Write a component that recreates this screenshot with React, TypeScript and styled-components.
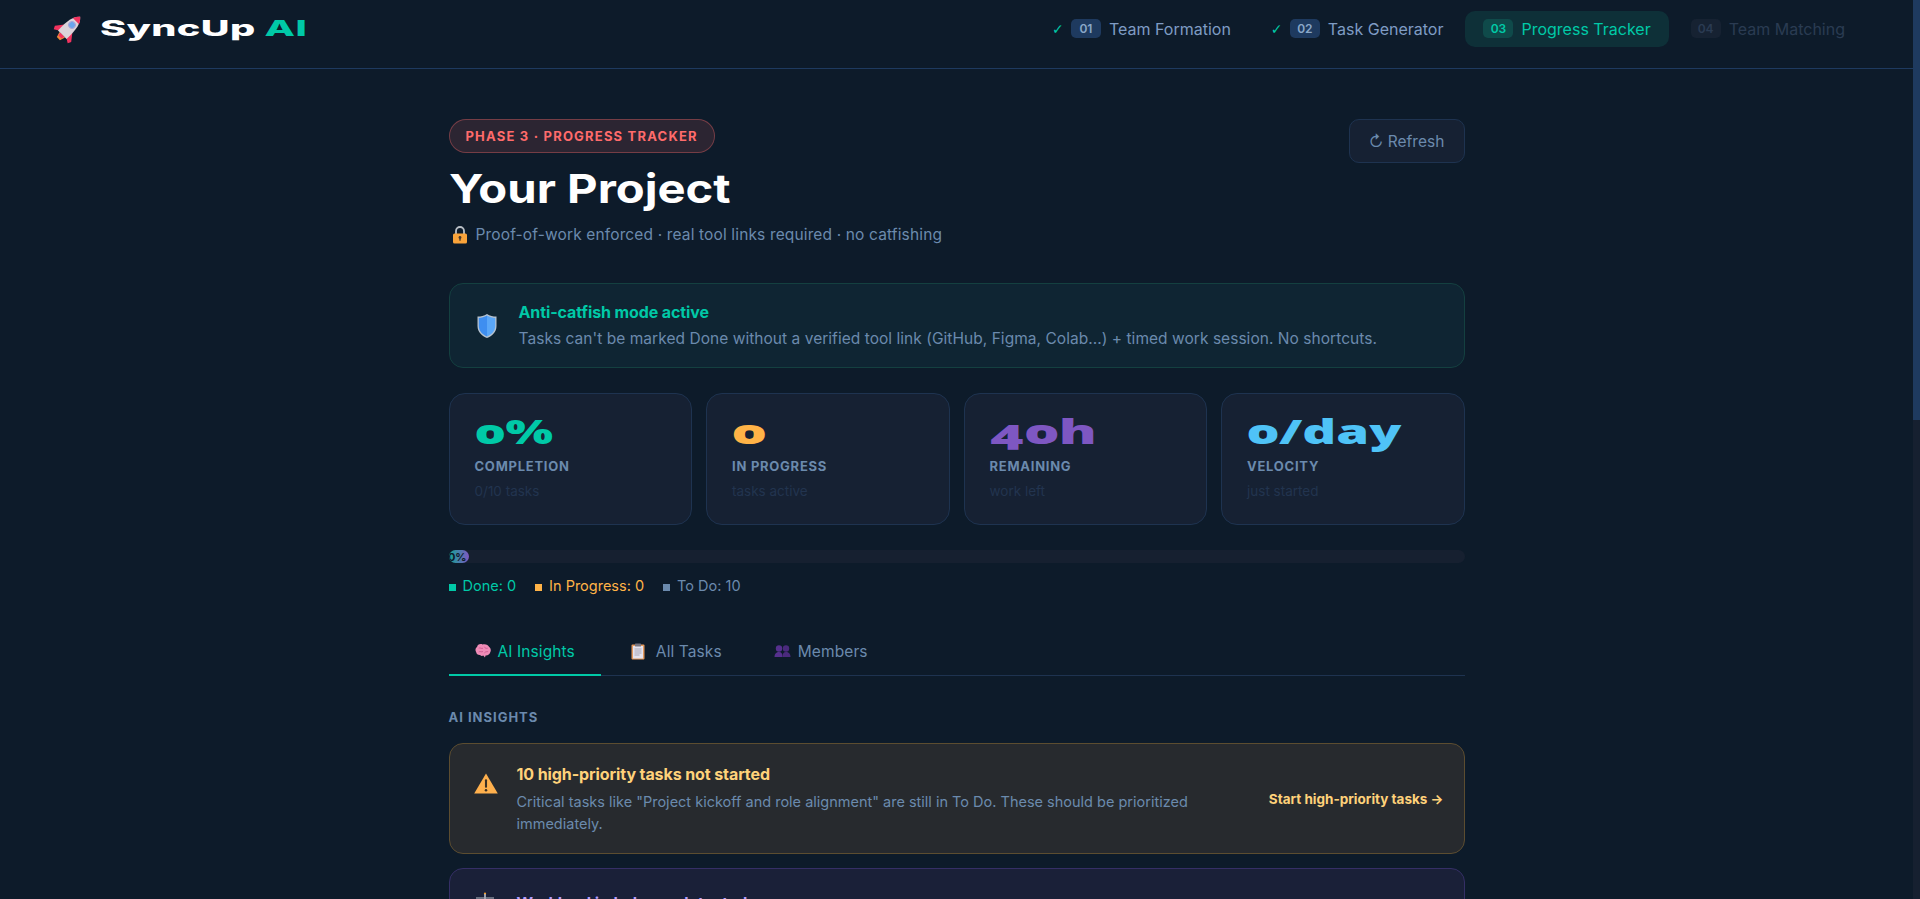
import styled, { createGlobalStyle } from "styled-components";

const GlobalStyle = createGlobalStyle`
  * { box-sizing: border-box; }
  html { scrollbar-width: none; }
  html, body { margin: 0; padding: 0; background: #0d1b2a; }
  body { font-family: "Inter", "Liberation Sans", sans-serif; color: #6b8aad; }
`;

const RocketIcon = () => (
  <svg width="33" height="33" viewBox="0 0 30 30">
    <g transform="rotate(45 15 15)">
      <path d="M11.5 22 L18.5 22 L17 27 L13 27 Z" fill="#f0883a" transform="translate(0 1)" />
      <path d="M10 15 L4.5 22 L6 25 L11 22 Z" fill="#f2335f" />
      <path d="M20 15 L25.5 22 L24 25 L19 22 Z" fill="#f2335f" />
      <path d="M15 0 C10.5 4 9 10 9.5 23 L20.5 23 C21 10 19.5 4 15 0 Z" fill="#dcd3d9" />
      <path d="M15 0 C13 1.8 12 3.4 11 5.5 L19 5.5 C18 3.4 17 1.8 15 0 Z" fill="#f2335f" />
      <path d="M12.5 23 L17.5 23 L17 26 L13 26 Z" fill="#f2335f" />
      <circle cx="15" cy="10.5" r="3" fill="#6aa5ee" stroke="#a9a6d8" strokeWidth="1" />
    </g>
  </svg>
);

const LockIcon = () => (
  <svg width="16" height="18" viewBox="0 0 16 18">
    <path d="M4 8 V5 a4 4 0 0 1 8 0 V8" fill="none" stroke="#b9bfc6" strokeWidth="1.8" />
    <rect x="1" y="7.5" width="14" height="10" rx="1.5" fill="#f9a33a" />
    <circle cx="8" cy="11.5" r="1.4" fill="#4b3a2a" />
    <rect x="7.3" y="11.5" width="1.4" height="3.2" fill="#4b3a2a" />
  </svg>
);

const ShieldIcon = () => (
  <svg width="22" height="26" viewBox="0 0 22 26">
    <path d="M11 1 C8 3 5 3.6 1.5 3.6 L1.5 13 C1.5 19 6 23 11 25 C16 23 20.5 19 20.5 13 L20.5 3.6 C17 3.6 14 3 11 1 Z" fill="#b6c2cf" />
    <path d="M11 2.6 C8.4 4.2 5.6 4.9 2.8 5 L2.8 13 C2.8 18 6.6 21.6 11 23.4 Z" fill="#3e8ef0" />
    <path d="M11 2.6 C13.6 4.2 16.4 4.9 19.2 5 L19.2 13 C19.2 18 15.4 21.6 11 23.4 Z" fill="#5aa7f8" />
  </svg>
);

const BrainIcon = () => (
  <svg width="17" height="16" viewBox="0 0 17 16">
    <path d="M8 1 C5 0 2.5 1.5 2.2 3.8 C0.4 4.8 0 7.4 1.2 9 C1.4 11 3.2 12.4 5.4 12.2 C6.4 13.4 7.8 13.4 8.8 12.8 L10.6 15 L11.2 12.8 C13.6 13 15.8 11.6 16.2 9.4 C17.4 7.4 16.6 4.8 15 3.8 C14.2 1.6 11 0 8 1 Z" fill="#ef8cb7" />
    <path d="M4 5 C5.5 4 7 6 8.5 5 M10 3.5 C10.5 5 12 5.5 13.5 5 M4 9 C5.5 8 7 9.5 8.5 8.5 M10 10 C11 8.5 12.5 9 14 8.5" fill="none" stroke="#c9578d" strokeWidth="0.9" />
  </svg>
);

const ClipboardIcon = () => (
  <svg width="14" height="17" viewBox="0 0 14 17">
    <rect x="0.5" y="1.5" width="13" height="15" rx="1" fill="#e39a5e" />
    <rect x="2" y="3" width="10" height="12.5" fill="#e4e3ee" />
    <rect x="4" y="0.5" width="6" height="3" rx="0.6" fill="#77757f" />
    <path d="M3.5 6 H10.5 M3.5 8 H10.5 M3.5 10 H10.5 M3.5 12 H8.5" stroke="#a3a2b0" strokeWidth="0.9" />
  </svg>
);

const MembersIcon = () => (
  <svg width="17" height="14" viewBox="0 0 17 14">
    <circle cx="5" cy="4.5" r="3.2" fill="#55308d" />
    <circle cx="12" cy="4.5" r="3.2" fill="#4a2a7c" />
    <path d="M0.5 13 C0.5 9.5 2.5 8 5 8 C7.5 8 8.5 9.5 8.5 13 Z" fill="#55308d" />
    <path d="M8.5 13 C8.5 9.5 9.5 8 12 8 C14.5 8 16.5 9.5 16.5 13 Z" fill="#4a2a7c" />
  </svg>
);

const WarningIcon = () => (
  <svg width="24" height="21" viewBox="0 0 23 20">
    <path d="M11.5 0.5 L22.8 19.5 L0.2 19.5 Z" fill="#ffb04d" />
    <rect x="10.5" y="6" width="2" height="8" rx="0.8" fill="#3b3024" />
    <circle cx="11.5" cy="16.4" r="1.2" fill="#3b3024" />
  </svg>
);

const ScaleIcon = () => (
  <svg width="22" height="22" viewBox="0 0 22 22">
    <circle cx="11" cy="1.6" r="1.1" fill="#f0a030" />
    <rect x="10.2" y="2" width="1.6" height="17" fill="#b9bfc9" />
    <path d="M2 6 H20" stroke="#9da4b0" strokeWidth="1.2" />
    <rect x="6" y="19" width="10" height="2" fill="#9da4b0" />
  </svg>
);

const Page = styled.div`
  min-height: 1280px;
  padding-right: 7px;
`;

const ScrollTrack = styled.div`
  position: fixed;
  top: 0;
  right: 0;
  bottom: 0;
  width: 7px;
  background: #162030;
`;

const ScrollThumb = styled.div`
  height: 420px;
  background: #1e3a5f;
`;

const Nav = styled.nav`
  height: 69px;
  border-bottom: 1px solid #1e3a5f;
  display: flex;
  align-items: center;
  justify-content: space-between;
  padding: 0 50px 0 52px;
`;

const Brand = styled.div`
  display: flex;
  align-items: center;
  gap: 15px;
  height: 56px;
  margin-top: -12px;
`;

const Wide = styled.span<{ $x: number }>`
  display: inline-block;
  transform: scaleX(${(p) => p.$x});
  transform-origin: left center;
  font-family: "Inter", "Liberation Sans", sans-serif;
  white-space: nowrap;
`;

const BrandName = styled(Wide)`
  font-size: 22px;
  font-weight: 800;
  color: #ffffff;
  letter-spacing: 0.2px;
  span { color: #00c9a7; }
`;

const Steps = styled.div`
  display: flex;
  align-items: center;
  gap: 4px;
  margin-top: -11px;
`;

const Step = styled.div<{ $state: "done" | "active" | "locked" }>`
  display: flex;
  align-items: center;
  height: 36px;
  padding: 0 18px;
  border-radius: 10px;
  font-size: 16px;
  white-space: nowrap;
  background: ${(p) => (p.$state === "active" ? "#0e3038" : "transparent")};
  color: ${(p) =>
    p.$state === "active" ? "#00c9a7" : p.$state === "locked" ? "#2a3b52" : "#7f9cc4"};
`;

const Check = styled.span`
  color: #00c9a7;
  font-family: "DejaVu Sans", sans-serif;
  font-size: 14px;
  width: 19px;
`;

const StepNum = styled.span<{ $state: "done" | "active" | "locked" }>`
  display: inline-flex;
  align-items: center;
  justify-content: center;
  width: 30px;
  height: 19px;
  margin-right: 8px;
  border-radius: 5px;
  font-size: 12px;
  font-weight: 600;
  background: ${(p) =>
    p.$state === "active" ? "#0f4a4a" : p.$state === "locked" ? "#162232" : "#1e3a5f"};
  color: ${(p) =>
    p.$state === "active" ? "#00c9a7" : p.$state === "locked" ? "#2a3b52" : "#8aa8c8"};
`;

const Main = styled.main`
  max-width: 1080px;
  margin: 0 auto;
  padding: 50px 32px 40px;
`;

const HeaderRow = styled.div`
  display: flex;
  justify-content: space-between;
  align-items: flex-start;
`;

const PhaseBadge = styled.div`
  display: inline-flex;
  align-items: center;
  height: 34px;
  padding: 0 16px;
  border-radius: 20px;
  border: 1px solid rgba(255, 107, 107, 0.35);
  background: rgba(255, 107, 107, 0.13);
  color: #ff6b6b;
  font-size: 13px;
  font-weight: 700;
  letter-spacing: 1.2px;
`;

const Title = styled(Wide)`
  display: block;
  margin-top: 10px;
  font-size: 40px;
  line-height: 52px;
  font-weight: 700;
  color: #ffffff;
`;

const Subtitle = styled.div`
  display: flex;
  align-items: center;
  gap: 8px;
  margin-top: 9px;
  padding-left: 3px;
  font-size: 15.5px;
  line-height: 22px;
  letter-spacing: 0.14px;
`;

const RefreshButton = styled.button`
  width: 116px;
  height: 44px;
  border-radius: 10px;
  border: 1px solid #1e3350;
  background: #162133;
  color: #6b8aad;
  font-family: inherit;
  font-size: 15.5px;
`;

const Banner = styled.div`
  display: flex;
  align-items: center;
  gap: 21px;
  height: 85px;
  margin-top: 37px;
  padding: 0 26px;
  border-radius: 14px;
  border: 1px solid #144040;
  background: #0f2533;
`;

const BannerTitle = styled.div`
  color: #00c9a7;
  font-size: 16px;
  font-weight: 700;
  line-height: 22px;
  letter-spacing: -0.1px;
`;

const BannerText = styled.div`
  font-size: 15.5px;
  line-height: 22px;
  margin-top: 5px;
  letter-spacing: 0.04px;
`;

const Stats = styled.div`
  display: grid;
  grid-template-columns: repeat(4, 1fr);
  gap: 14px;
  margin-top: 25px;
`;

const StatCard = styled.div`
  height: 132px;
  padding: 20px 25px;
  border-radius: 16px;
  border: 1px solid #1e3350;
  background: #162133;
`;

const StatValue = styled(Wide)<{ $color: string }>`
  display: block;
  color: ${(p) => p.$color};
  font-family: "Open Sans", "Inter", sans-serif;
  font-variant-numeric: oldstyle-nums;
  font-size: 33px;
  line-height: 36px;
  font-weight: 800;
`;

const StatLabel = styled.div`
  margin-top: 7px;
  font-size: 13px;
  line-height: 18px;
  font-weight: 700;
  letter-spacing: 0.75px;
`;

const StatHint = styled.div`
  margin-top: 7px;
  font-size: 13.5px;
  line-height: 18px;
  color: #22344f;
`;

const Track = styled.div`
  height: 13px;
  margin-top: 25px;
  border-radius: 7px;
  background: #162030;
`;

const Fill = styled.div`
  display: flex;
  justify-content: flex-end;
  align-items: center;
  width: 20px;
  height: 100%;
  overflow: hidden;
  border-radius: 7px;
  background: linear-gradient(90deg, #14a596, #7e57c2);
  color: #0d1b2a;
  font-size: 11px;
  font-weight: 700;
  padding-right: 2px;
`;

const Legend = styled.div`
  display: flex;
  gap: 19px;
  margin-top: 13px;
  font-size: 14.5px;
  line-height: 20px;
`;

const LegendItem = styled.span<{ $color: string }>`
  color: ${(p) => p.$color};
  &::before {
    content: "";
    display: inline-block;
    width: 7px;
    height: 7px;
    margin-right: 7px;
    vertical-align: 0;
    background: ${(p) => p.$color};
  }
`;

const Tabs = styled.div`
  display: flex;
  margin-top: 32px;
  border-bottom: 1px solid #1e3350;
`;

const Tab = styled.div<{ $active?: boolean }>`
  display: flex;
  align-items: center;
  gap: 7px;
  height: 48px;
  padding: 0 26px;
  margin-bottom: -1px;
  font-size: 15.5px;
  letter-spacing: 0.1px;
  color: ${(p) => (p.$active ? "#00c9a7" : "#6b8aad")};
  border-bottom: 2px solid ${(p) => (p.$active ? "#00c9a7" : "transparent")};
`;

const TabIcon = styled.span<{ $w: number }>`
  display: inline-flex;
  justify-content: center;
  width: ${(p) => p.$w}px;
`;

const SectionLabel = styled.div`
  margin-top: 32px;
  font-size: 13px;
  line-height: 18px;
  font-weight: 700;
  letter-spacing: 1px;
`;

const Insight = styled.div<{ $bg: string; $border: string }>`
  display: flex;
  align-items: center;
  gap: 19px;
  margin-top: 17px;
  padding: 18px 20px 18px 24px;
  border-radius: 14px;
  border: 1px solid ${(p) => p.$border};
  background: ${(p) => p.$bg};
  & + & { margin-top: 14px; }
`;

const InsightIcon = styled.div<{ $top: number }>`
  flex: none;
  align-self: flex-start;
  margin-top: ${(p) => p.$top}px;
  width: 24px;
`;

const InsightBody = styled.div`
  flex: 1;
`;

const InsightTitle = styled.div<{ $color: string }>`
  color: ${(p) => p.$color};
  font-size: 16px;
  line-height: 24px;
  font-weight: 700;
  letter-spacing: -0.1px;
`;

const InsightText = styled.div`
  margin-top: 5px;
  font-size: 14.5px;
  line-height: 22px;
  max-width: 716px;
`;

const InsightAction = styled.div<{ $color: string }>`
  flex: none;
  color: ${(p) => p.$color};
  font-size: 13.5px;
  font-weight: 700;
  letter-spacing: 0;
  margin-left: 16px;
`;

const steps = [
  { num: "01", label: "Team Formation", state: "done" as const },
  { num: "02", label: "Task Generator", state: "done" as const },
  { num: "03", label: "Progress Tracker", state: "active" as const },
  { num: "04", label: "Team Matching", state: "locked" as const },
];

const stats = [
  { value: "0%", label: "COMPLETION", hint: "0/10 tasks", color: "#00c9a7", x: 1.52 },
  { value: "0", label: "IN PROGRESS", hint: "tasks active", color: "#ffb347", x: 1.72 },
  { value: "40h", label: "REMAINING", hint: "work left", color: "#7e57c2", x: 1.72 },
  { value: "0/day", label: "VELOCITY", hint: "just started", color: "#4fc3f7", x: 1.6 },
];

const App = () => {
  return (
    <Page>
      <GlobalStyle />
      <ScrollTrack>
        <ScrollThumb />
      </ScrollTrack>
      <Nav>
        <Brand>
          <RocketIcon />
          <BrandName $x={1.8}>
            SyncUp <span>AI</span>
          </BrandName>
        </Brand>
        <Steps>
          {steps.map((s) => (
            <Step key={s.num} $state={s.state}>
              {s.state === "done" && <Check>✓</Check>}
              <StepNum $state={s.state}>{s.num}</StepNum>
              {s.label}
            </Step>
          ))}
        </Steps>
      </Nav>

      <Main>
        <HeaderRow>
          <div>
            <PhaseBadge>PHASE 3 · PROGRESS TRACKER</PhaseBadge>
            <Title $x={1.18}>Your Project</Title>
            <Subtitle>
              <LockIcon />
              Proof-of-work enforced · real tool links required · no catfishing
            </Subtitle>
          </div>
          <RefreshButton>↻ Refresh</RefreshButton>
        </HeaderRow>

        <Banner>
          <ShieldIcon />
          <div>
            <BannerTitle>Anti-catfish mode active</BannerTitle>
            <BannerText>
              Tasks can't be marked Done without a verified tool link (GitHub, Figma, Colab...) +
              timed work session. No shortcuts.
            </BannerText>
          </div>
        </Banner>

        <Stats>
          {stats.map((s) => (
            <StatCard key={s.label}>
              <StatValue $x={s.x} $color={s.color}>
                {s.value}
              </StatValue>
              <StatLabel>{s.label}</StatLabel>
              <StatHint>{s.hint}</StatHint>
            </StatCard>
          ))}
        </Stats>

        <Track>
          <Fill>0%</Fill>
        </Track>

        <Legend>
          <LegendItem $color="#00c9a7">Done: 0</LegendItem>
          <LegendItem $color="#ffb347">In Progress: 0</LegendItem>
          <LegendItem $color="#6b8aad">To Do: 10</LegendItem>
        </Legend>

        <Tabs>
          <Tab $active>
            <TabIcon $w={16}>
              <BrainIcon />
            </TabIcon>
            AI Insights
          </Tab>
          <Tab>
            <TabIcon $w={22}>
              <ClipboardIcon />
            </TabIcon>
            All Tasks
          </Tab>
          <Tab>
            <TabIcon $w={17}>
              <MembersIcon />
            </TabIcon>
            Members
          </Tab>
        </Tabs>

        <SectionLabel>AI INSIGHTS</SectionLabel>

        <Insight $bg="#272a2e" $border="#5c4d30">
          <InsightIcon $top={11}>
            <WarningIcon />
          </InsightIcon>
          <InsightBody>
            <InsightTitle $color="#ffd27a">10 high-priority tasks not started</InsightTitle>
            <InsightText>
              Critical tasks like "Project kickoff and role alignment" are still in To Do. These
              should be prioritized immediately.
            </InsightText>
          </InsightBody>
          <InsightAction $color="#ffd27a">Start high-priority tasks →</InsightAction>
        </Insight>

        <Insight $bg="#1a2038" $border="#352f66">
          <InsightIcon $top={5}>
            <ScaleIcon />
          </InsightIcon>
          <InsightBody>
            <InsightTitle $color="#b39dff">Workload imbalance detected</InsightTitle>
          </InsightBody>
        </Insight>
      </Main>
    </Page>
  );
};

export default App;
